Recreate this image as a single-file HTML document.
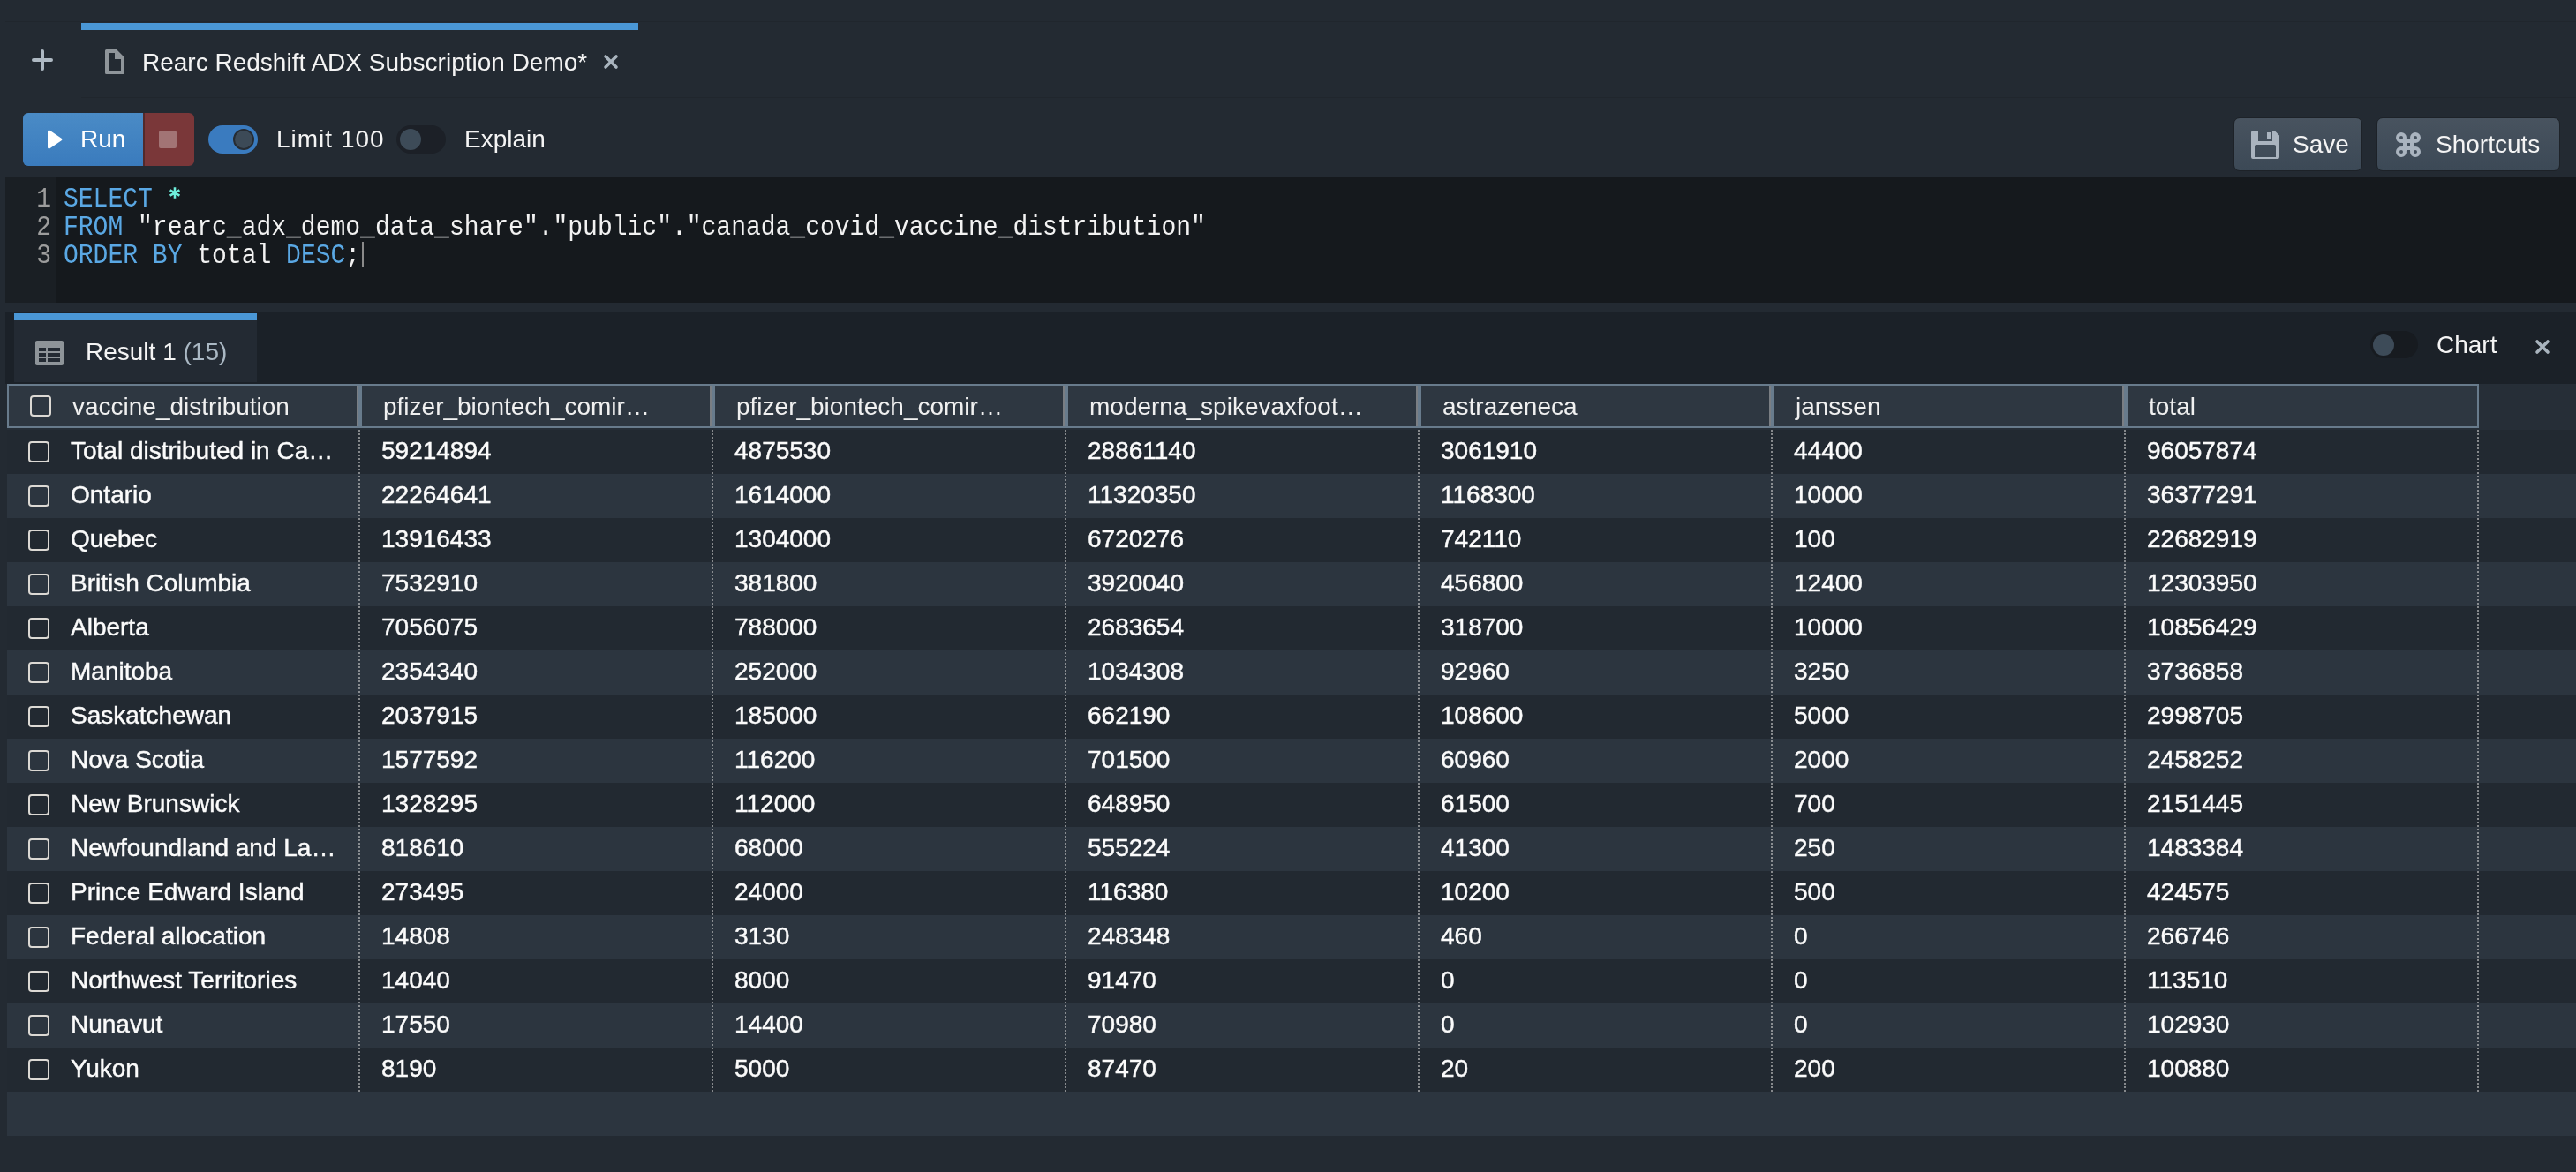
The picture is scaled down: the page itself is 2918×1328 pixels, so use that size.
<!DOCTYPE html><html><head><meta charset="utf-8"><style>
*{margin:0;padding:0;box-sizing:border-box}
html,body{width:2918px;height:1328px;overflow:hidden;background:#232a32;font-family:"Liberation Sans",sans-serif;color:#f4f4f4;-webkit-font-smoothing:antialiased}
.t,.tx{will-change:transform}
.a{position:absolute}
.t{position:absolute;font-size:28px;line-height:28px;white-space:nowrap}
.mono{font-family:"Liberation Mono",monospace}
.kw{color:#5aa8e4}
.st{color:#f2f2f2}
.op{color:#5fdcc4}
.cb{position:absolute;width:24px;height:24px;border:2px solid #dcd9d4;border-radius:4px}
.tx{position:absolute;font-size:28px;line-height:28px;white-space:nowrap;color:#fbfbfb}
.rw{-webkit-text-stroke:0.45px #fbfbfb}
</style></head><body>
<div class="a" style="left:6px;top:24px;width:2912px;height:1px;background:#20262d"></div>
<div class="a" style="left:92px;top:26px;width:631px;height:8px;background:#4a97d6"></div>
<div class="a" style="left:92px;top:110px;width:2826px;height:1px;background:#20262d"></div>
<svg class="a" style="left:34px;top:54px" width="28" height="28" viewBox="0 0 28 28"><path d="M14 4V24M4 14H24" stroke="#aeb9c3" stroke-width="4" stroke-linecap="round"/></svg>
<svg class="a" style="left:119px;top:56px" width="22" height="28" viewBox="0 0 22 28"><path d="M1.5 0H13L22 9V26.5Q22 28 20.5 28H1.5Q0 28 0 26.5V1.5Q0 0 1.5 0ZM4 4H11V11H18V24H4Z" fill="#8f959a" fill-rule="evenodd"/></svg>
<div class="t" style="left:161px;top:57px;color:#f4f4f4">Rearc Redshift ADX Subscription Demo*</div>
<svg class="a" style="left:682px;top:60px" width="20" height="20" viewBox="0 0 20 20"><path d="M4 4L16 16M16 4L4 16" stroke="#a9b4be" stroke-width="3.6" stroke-linecap="round"/></svg>
<div class="a" style="left:26px;top:128px;width:136px;height:60px;border-radius:6px 0 0 6px;background:linear-gradient(#4a8bc6,#3a7bbd)"></div>
<div class="a" style="left:162px;top:128px;width:2px;height:60px;background:#522a2c"></div>
<div class="a" style="left:164px;top:128px;width:56px;height:60px;border-radius:0 6px 6px 0;background:#7a3739"></div>
<div class="a" style="left:180px;top:148px;width:20px;height:20px;border-radius:2px;background:#a27475"></div>
<svg class="a" style="left:51px;top:147px" width="22" height="22" viewBox="0 0 22 22"><path d="M4.5 2L17.8 11L4.5 20Z" fill="#ffffff" stroke="#ffffff" stroke-width="3" stroke-linejoin="round"/></svg>
<div class="t" style="left:91px;top:144px;color:#ffffff">Run</div>
<div class="a" style="left:236px;top:142px;width:56px;height:32px;border-radius:16px;background:#3a7bbf"></div>
<div class="a" style="left:264px;top:146px;width:24px;height:24px;border-radius:12px;background:#3c4a57;border:2px solid #262c33"></div>
<div class="t" style="left:313px;top:144px;letter-spacing:1px">Limit 100</div>
<div class="a" style="left:449px;top:142px;width:56px;height:32px;border-radius:16px;background:#1c2027"></div>
<div class="a" style="left:453px;top:146px;width:24px;height:24px;border-radius:12px;background:#3d4b58"></div>
<div class="t" style="left:526px;top:144px">Explain</div>
<div class="a" style="left:2530px;top:133px;width:146px;height:61px;border-radius:7px;background:linear-gradient(#48535f,#3c4956);border:1px solid #1d2228"></div>
<svg class="a" style="left:2550px;top:148px" width="32" height="32" viewBox="0 0 32 32"><path d="M2 0H26.5L32 5.5V30Q32 32 30 32H2Q0 32 0 30V2Q0 0 2 0ZM8 0H24V12H8ZM18 2H22V10H18ZM6 16H26Q28 16 28 18V30H4V18Q4 16 6 16Z" fill="#aab4bf" fill-rule="evenodd"/></svg>
<div class="t" style="left:2597px;top:150px">Save</div>
<div class="a" style="left:2692px;top:133px;width:208px;height:61px;border-radius:7px;background:linear-gradient(#48535f,#3c4956);border:1px solid #1d2228"></div>
<svg class="a" style="left:2714px;top:150px" width="28" height="28" viewBox="0 0 28 28"><g fill="none" stroke="#aab4bf" stroke-width="4"><circle cx="6" cy="6" r="4"/><circle cx="22" cy="6" r="4"/><circle cx="6" cy="22" r="4"/><circle cx="22" cy="22" r="4"/><path d="M10 7V21M18 7V21M7 10H21M7 18H21"/></g></svg>
<div class="t" style="left:2759px;top:150px">Shortcuts</div>
<div class="a" style="left:6px;top:200px;width:2912px;height:143px;background:#15191d"></div>
<div class="a" style="left:6px;top:200px;width:58px;height:143px;background:#1a1f24"></div>
<div class="t mono" style="left:30px;top:211px;width:28px;text-align:right;line-height:32px;color:#9d9d9d;transform:scaleY(1.15);transform-origin:0 24px">1</div>
<div class="t mono" style="left:72px;top:211px;line-height:32px;transform:scaleY(1.15);transform-origin:0 24px"><span class="kw">SELECT</span></div>
<div class="t mono" style="left:30px;top:243px;width:28px;text-align:right;line-height:32px;color:#9d9d9d;transform:scaleY(1.15);transform-origin:0 24px">2</div>
<div class="t mono" style="left:72px;top:243px;line-height:32px;transform:scaleY(1.15);transform-origin:0 24px"><span class="kw">FROM</span> <span class="st">"rearc_adx_demo_data_share"."public"."canada_covid_vaccine_distribution"</span></div>
<div class="t mono" style="left:30px;top:275px;width:28px;text-align:right;line-height:32px;color:#9d9d9d;transform:scaleY(1.15);transform-origin:0 24px">3</div>
<div class="t mono" style="left:72px;top:275px;line-height:32px;transform:scaleY(1.15);transform-origin:0 24px"><span class="kw">ORDER</span> <span class="kw">BY</span> <span class="st">total</span> <span class="kw">DESC</span><span class="st">;</span></div>
<svg class="a" style="left:190px;top:210px" width="16" height="17" viewBox="0 0 16 17"><path d="M8 2.2V14.8M2.6 5.35L13.4 11.65M2.6 11.65L13.4 5.35" stroke="#6eeedb" stroke-width="2.6"/></svg>
<div class="a" style="left:410px;top:274px;width:2px;height:28px;background:#8a8a8a"></div>
<div class="a" style="left:6px;top:353px;width:2912px;height:82px;background:#1b2128"></div>
<div class="a" style="left:16px;top:363px;width:275px;height:70px;background:#232a33"></div>
<div class="a" style="left:16px;top:355px;width:275px;height:8px;background:#4a97d6"></div>
<svg class="a" style="left:40px;top:386px" width="32" height="28" viewBox="0 0 32 28"><path d="M2 0H30Q32 0 32 2V26Q32 28 30 28H2Q0 28 0 26V2Q0 0 2 0ZM4 8H12V12H4ZM14 8H28V12H14ZM4 14H12V18H4ZM14 14H28V18H14ZM4 20H12V24H4ZM14 20H28V24H14Z" fill="#8e9499" fill-rule="evenodd"/></svg>
<div class="t" style="left:97px;top:385px">Result 1 <span style="color:#aab8c4">(15)</span></div>
<div class="a" style="left:2685px;top:375px;width:54px;height:31px;border-radius:16px;background:#171b20"></div>
<div class="a" style="left:2688px;top:379px;width:24px;height:24px;border-radius:12px;background:#3d4b58"></div>
<div class="t" style="left:2760px;top:377px">Chart</div>
<svg class="a" style="left:2870px;top:383px" width="20" height="20" viewBox="0 0 20 20"><path d="M4 4L16 16M16 4L4 16" stroke="#a9b4be" stroke-width="3.6" stroke-linecap="round"/></svg>
<div class="a" style="left:8px;top:435px;width:2910px;height:52px;background:#262e37"></div>
<div class="a" style="left:8px;top:435px;width:2800px;height:50px;background:#2e3741;border:2px solid #687b8c"></div>
<div class="a" style="left:404px;top:435px;width:6px;height:50px;background:#687b8c"></div>
<div class="a" style="left:404px;top:437px;width:2px;height:46px;background:#7a7e83"></div>
<div class="a" style="left:804px;top:435px;width:6px;height:50px;background:#687b8c"></div>
<div class="a" style="left:804px;top:437px;width:2px;height:46px;background:#7a7e83"></div>
<div class="a" style="left:1204px;top:435px;width:6px;height:50px;background:#687b8c"></div>
<div class="a" style="left:1204px;top:437px;width:2px;height:46px;background:#7a7e83"></div>
<div class="a" style="left:1604px;top:435px;width:6px;height:50px;background:#687b8c"></div>
<div class="a" style="left:1604px;top:437px;width:2px;height:46px;background:#7a7e83"></div>
<div class="a" style="left:2004px;top:435px;width:6px;height:50px;background:#687b8c"></div>
<div class="a" style="left:2004px;top:437px;width:2px;height:46px;background:#7a7e83"></div>
<div class="a" style="left:2404px;top:435px;width:6px;height:50px;background:#687b8c"></div>
<div class="a" style="left:2404px;top:437px;width:2px;height:46px;background:#7a7e83"></div>
<div class="cb" style="left:34px;top:448px"></div>
<div class="tx" style="left:82px;top:447px;color:#f0f0f0">vaccine_distribution</div>
<div class="tx" style="left:434px;top:447px;color:#f0f0f0">pfizer_biontech_comir…</div>
<div class="tx" style="left:834px;top:447px;color:#f0f0f0">pfizer_biontech_comir…</div>
<div class="tx" style="left:1234px;top:447px;color:#f0f0f0">moderna_spikevaxfoot…</div>
<div class="tx" style="left:1634px;top:447px;color:#f0f0f0">astrazeneca</div>
<div class="tx" style="left:2034px;top:447px;color:#f0f0f0">janssen</div>
<div class="tx" style="left:2434px;top:447px;color:#f0f0f0">total</div>
<div class="a" style="left:8px;top:487px;width:2910px;height:50px;background:#222931"></div>
<div class="cb" style="left:32px;top:500px"></div>
<div class="tx rw" style="left:80px;top:497px">Total distributed in Ca…</div>
<div class="tx rw" style="left:432px;top:497px">59214894</div>
<div class="tx rw" style="left:832px;top:497px">4875530</div>
<div class="tx rw" style="left:1232px;top:497px">28861140</div>
<div class="tx rw" style="left:1632px;top:497px">3061910</div>
<div class="tx rw" style="left:2032px;top:497px">44400</div>
<div class="tx rw" style="left:2432px;top:497px">96057874</div>
<div class="a" style="left:8px;top:537px;width:2910px;height:50px;background:#2c353f"></div>
<div class="cb" style="left:32px;top:550px"></div>
<div class="tx rw" style="left:80px;top:547px">Ontario</div>
<div class="tx rw" style="left:432px;top:547px">22264641</div>
<div class="tx rw" style="left:832px;top:547px">1614000</div>
<div class="tx rw" style="left:1232px;top:547px">11320350</div>
<div class="tx rw" style="left:1632px;top:547px">1168300</div>
<div class="tx rw" style="left:2032px;top:547px">10000</div>
<div class="tx rw" style="left:2432px;top:547px">36377291</div>
<div class="a" style="left:8px;top:587px;width:2910px;height:50px;background:#222931"></div>
<div class="cb" style="left:32px;top:600px"></div>
<div class="tx rw" style="left:80px;top:597px">Quebec</div>
<div class="tx rw" style="left:432px;top:597px">13916433</div>
<div class="tx rw" style="left:832px;top:597px">1304000</div>
<div class="tx rw" style="left:1232px;top:597px">6720276</div>
<div class="tx rw" style="left:1632px;top:597px">742110</div>
<div class="tx rw" style="left:2032px;top:597px">100</div>
<div class="tx rw" style="left:2432px;top:597px">22682919</div>
<div class="a" style="left:8px;top:637px;width:2910px;height:50px;background:#2c353f"></div>
<div class="cb" style="left:32px;top:650px"></div>
<div class="tx rw" style="left:80px;top:647px">British Columbia</div>
<div class="tx rw" style="left:432px;top:647px">7532910</div>
<div class="tx rw" style="left:832px;top:647px">381800</div>
<div class="tx rw" style="left:1232px;top:647px">3920040</div>
<div class="tx rw" style="left:1632px;top:647px">456800</div>
<div class="tx rw" style="left:2032px;top:647px">12400</div>
<div class="tx rw" style="left:2432px;top:647px">12303950</div>
<div class="a" style="left:8px;top:687px;width:2910px;height:50px;background:#222931"></div>
<div class="cb" style="left:32px;top:700px"></div>
<div class="tx rw" style="left:80px;top:697px">Alberta</div>
<div class="tx rw" style="left:432px;top:697px">7056075</div>
<div class="tx rw" style="left:832px;top:697px">788000</div>
<div class="tx rw" style="left:1232px;top:697px">2683654</div>
<div class="tx rw" style="left:1632px;top:697px">318700</div>
<div class="tx rw" style="left:2032px;top:697px">10000</div>
<div class="tx rw" style="left:2432px;top:697px">10856429</div>
<div class="a" style="left:8px;top:737px;width:2910px;height:50px;background:#2c353f"></div>
<div class="cb" style="left:32px;top:750px"></div>
<div class="tx rw" style="left:80px;top:747px">Manitoba</div>
<div class="tx rw" style="left:432px;top:747px">2354340</div>
<div class="tx rw" style="left:832px;top:747px">252000</div>
<div class="tx rw" style="left:1232px;top:747px">1034308</div>
<div class="tx rw" style="left:1632px;top:747px">92960</div>
<div class="tx rw" style="left:2032px;top:747px">3250</div>
<div class="tx rw" style="left:2432px;top:747px">3736858</div>
<div class="a" style="left:8px;top:787px;width:2910px;height:50px;background:#222931"></div>
<div class="cb" style="left:32px;top:800px"></div>
<div class="tx rw" style="left:80px;top:797px">Saskatchewan</div>
<div class="tx rw" style="left:432px;top:797px">2037915</div>
<div class="tx rw" style="left:832px;top:797px">185000</div>
<div class="tx rw" style="left:1232px;top:797px">662190</div>
<div class="tx rw" style="left:1632px;top:797px">108600</div>
<div class="tx rw" style="left:2032px;top:797px">5000</div>
<div class="tx rw" style="left:2432px;top:797px">2998705</div>
<div class="a" style="left:8px;top:837px;width:2910px;height:50px;background:#2c353f"></div>
<div class="cb" style="left:32px;top:850px"></div>
<div class="tx rw" style="left:80px;top:847px">Nova Scotia</div>
<div class="tx rw" style="left:432px;top:847px">1577592</div>
<div class="tx rw" style="left:832px;top:847px">116200</div>
<div class="tx rw" style="left:1232px;top:847px">701500</div>
<div class="tx rw" style="left:1632px;top:847px">60960</div>
<div class="tx rw" style="left:2032px;top:847px">2000</div>
<div class="tx rw" style="left:2432px;top:847px">2458252</div>
<div class="a" style="left:8px;top:887px;width:2910px;height:50px;background:#222931"></div>
<div class="cb" style="left:32px;top:900px"></div>
<div class="tx rw" style="left:80px;top:897px">New Brunswick</div>
<div class="tx rw" style="left:432px;top:897px">1328295</div>
<div class="tx rw" style="left:832px;top:897px">112000</div>
<div class="tx rw" style="left:1232px;top:897px">648950</div>
<div class="tx rw" style="left:1632px;top:897px">61500</div>
<div class="tx rw" style="left:2032px;top:897px">700</div>
<div class="tx rw" style="left:2432px;top:897px">2151445</div>
<div class="a" style="left:8px;top:937px;width:2910px;height:50px;background:#2c353f"></div>
<div class="cb" style="left:32px;top:950px"></div>
<div class="tx rw" style="left:80px;top:947px">Newfoundland and La…</div>
<div class="tx rw" style="left:432px;top:947px">818610</div>
<div class="tx rw" style="left:832px;top:947px">68000</div>
<div class="tx rw" style="left:1232px;top:947px">555224</div>
<div class="tx rw" style="left:1632px;top:947px">41300</div>
<div class="tx rw" style="left:2032px;top:947px">250</div>
<div class="tx rw" style="left:2432px;top:947px">1483384</div>
<div class="a" style="left:8px;top:987px;width:2910px;height:50px;background:#222931"></div>
<div class="cb" style="left:32px;top:1000px"></div>
<div class="tx rw" style="left:80px;top:997px">Prince Edward Island</div>
<div class="tx rw" style="left:432px;top:997px">273495</div>
<div class="tx rw" style="left:832px;top:997px">24000</div>
<div class="tx rw" style="left:1232px;top:997px">116380</div>
<div class="tx rw" style="left:1632px;top:997px">10200</div>
<div class="tx rw" style="left:2032px;top:997px">500</div>
<div class="tx rw" style="left:2432px;top:997px">424575</div>
<div class="a" style="left:8px;top:1037px;width:2910px;height:50px;background:#2c353f"></div>
<div class="cb" style="left:32px;top:1050px"></div>
<div class="tx rw" style="left:80px;top:1047px">Federal allocation</div>
<div class="tx rw" style="left:432px;top:1047px">14808</div>
<div class="tx rw" style="left:832px;top:1047px">3130</div>
<div class="tx rw" style="left:1232px;top:1047px">248348</div>
<div class="tx rw" style="left:1632px;top:1047px">460</div>
<div class="tx rw" style="left:2032px;top:1047px">0</div>
<div class="tx rw" style="left:2432px;top:1047px">266746</div>
<div class="a" style="left:8px;top:1087px;width:2910px;height:50px;background:#222931"></div>
<div class="cb" style="left:32px;top:1100px"></div>
<div class="tx rw" style="left:80px;top:1097px">Northwest Territories</div>
<div class="tx rw" style="left:432px;top:1097px">14040</div>
<div class="tx rw" style="left:832px;top:1097px">8000</div>
<div class="tx rw" style="left:1232px;top:1097px">91470</div>
<div class="tx rw" style="left:1632px;top:1097px">0</div>
<div class="tx rw" style="left:2032px;top:1097px">0</div>
<div class="tx rw" style="left:2432px;top:1097px">113510</div>
<div class="a" style="left:8px;top:1137px;width:2910px;height:50px;background:#2c353f"></div>
<div class="cb" style="left:32px;top:1150px"></div>
<div class="tx rw" style="left:80px;top:1147px">Nunavut</div>
<div class="tx rw" style="left:432px;top:1147px">17550</div>
<div class="tx rw" style="left:832px;top:1147px">14400</div>
<div class="tx rw" style="left:1232px;top:1147px">70980</div>
<div class="tx rw" style="left:1632px;top:1147px">0</div>
<div class="tx rw" style="left:2032px;top:1147px">0</div>
<div class="tx rw" style="left:2432px;top:1147px">102930</div>
<div class="a" style="left:8px;top:1187px;width:2910px;height:50px;background:#222931"></div>
<div class="cb" style="left:32px;top:1200px"></div>
<div class="tx rw" style="left:80px;top:1197px">Yukon</div>
<div class="tx rw" style="left:432px;top:1197px">8190</div>
<div class="tx rw" style="left:832px;top:1197px">5000</div>
<div class="tx rw" style="left:1232px;top:1197px">87470</div>
<div class="tx rw" style="left:1632px;top:1197px">20</div>
<div class="tx rw" style="left:2032px;top:1197px">200</div>
<div class="tx rw" style="left:2432px;top:1197px">100880</div>
<div class="a" style="left:8px;top:1237px;width:2910px;height:50px;background:#2c353f"></div>
<div class="a" style="left:406px;top:487px;width:2px;height:750px;background:repeating-linear-gradient(#c8c8c8 0 2px,transparent 2px 4px);opacity:.6"></div>
<div class="a" style="left:806px;top:487px;width:2px;height:750px;background:repeating-linear-gradient(#c8c8c8 0 2px,transparent 2px 4px);opacity:.6"></div>
<div class="a" style="left:1206px;top:487px;width:2px;height:750px;background:repeating-linear-gradient(#c8c8c8 0 2px,transparent 2px 4px);opacity:.6"></div>
<div class="a" style="left:1606px;top:487px;width:2px;height:750px;background:repeating-linear-gradient(#c8c8c8 0 2px,transparent 2px 4px);opacity:.6"></div>
<div class="a" style="left:2006px;top:487px;width:2px;height:750px;background:repeating-linear-gradient(#c8c8c8 0 2px,transparent 2px 4px);opacity:.6"></div>
<div class="a" style="left:2406px;top:487px;width:2px;height:750px;background:repeating-linear-gradient(#c8c8c8 0 2px,transparent 2px 4px);opacity:.6"></div>
<div class="a" style="left:2806px;top:487px;width:2px;height:750px;background:repeating-linear-gradient(#c8c8c8 0 2px,transparent 2px 4px);opacity:.6"></div>
</body></html>
